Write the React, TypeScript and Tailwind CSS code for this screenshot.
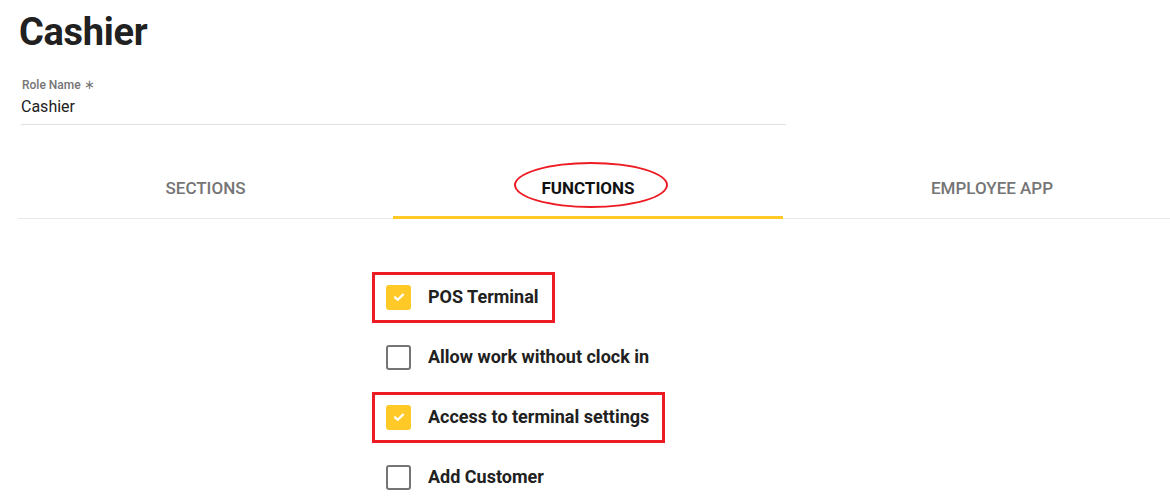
import React from 'react';

const tabs = [
  { label: 'SECTIONS', width: 'w-[375px]', active: false },
  { label: 'FUNCTIONS', width: 'w-[390px]', active: true },
  { label: 'EMPLOYEE APP', width: 'w-[418px]', active: false },
];

const functionsData = [
  { label: 'POS Terminal', checked: true, marked: true },
  { label: 'Allow work without clock in', checked: false, marked: false },
  { label: 'Access to terminal settings', checked: true, marked: true },
  { label: 'Add Customer', checked: false, marked: false },
];

function Checkbox({ checked }: { checked: boolean }) {
  if (checked) {
    return (
      <span className="flex h-[25px] w-[25px] items-center justify-center rounded-[3px] bg-[#ffca28]">
        <svg width="12" height="12" viewBox="0 0 12 12" fill="none">
          <path d="M2 6.3 L4.8 8.8 L10 3.6" stroke="white" strokeWidth="2.3" strokeLinecap="round" strokeLinejoin="round" />
        </svg>
      </span>
    );
  }
  return <span className="block h-[25px] w-[25px] rounded-[3px] border-2 border-[#757575] bg-white" />;
}

export default function App() {
  return (
    <div className="h-[498px] w-[1170px] overflow-hidden bg-white font-['Roboto',sans-serif] text-[#212121]">
      {/* Header */}
      <h1 className="ml-[19px] pt-[10px] text-[38px] font-bold leading-[44px] tracking-[-0.3px] text-[#212121]">
        Cashier
      </h1>

      {/* Role name field */}
      <div className="ml-[21px] mt-[24px] w-[765px] border-b border-[#e0e0e0] pb-[8px]">
        <label className="block pl-[1px] text-[12px] font-medium leading-[14px] text-[#757575]">
          Role Name <span className="text-[13px] font-normal">∗</span>
        </label>
        <div className="mt-[5px] text-[16px] leading-[19px] text-[#212121]">Cashier</div>
      </div>

      {/* Tabs */}
      <div className="ml-[18px] mt-[35px] flex w-[1183px] border-b border-[#e6e9eb]">
        {tabs.map((tab) => (
          <div
            key={tab.label}
            className={`relative flex h-[58px] ${tab.width} items-center justify-center`}
          >
            <span
              className={
                tab.active
                  ? 'text-[17px] font-bold text-[#111]'
                  : 'text-[17px] font-medium text-[#757575]'
              }
            >
              {tab.label}
            </span>
            {tab.active && (
              <>
                <span className="absolute bottom-[-1px] left-0 right-0 h-[3px] bg-[#ffca28]" />
                <span className="pointer-events-none absolute left-[121px] top-[2px] h-[46px] w-[154px] rounded-[50%] border-[2.5px] border-[#ed1c24]" />
              </>
            )}
          </div>
        ))}
      </div>

      {/* Functions list */}
      <div className="ml-[386px] mt-[48px] flex flex-col">
        {functionsData.map((item) => (
          <div key={item.label} className="flex h-[60px] items-center">
            <div className="relative flex items-center">
              {item.marked && (
                <span className="pointer-events-none absolute -bottom-[13px] -left-[14px] -right-[16px] -top-[13px] border-[3px] border-[#ed1c24]" />
              )}
              <Checkbox checked={item.checked} />
              <span className="ml-[17px] text-[18px] font-bold leading-[22px] text-[#212121]">
                {item.label}
              </span>
            </div>
          </div>
        ))}
      </div>
    </div>
  );
}
